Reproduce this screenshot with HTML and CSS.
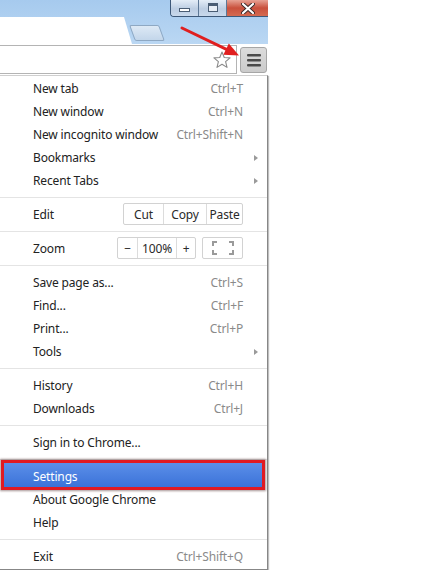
FILE: index.html
```html
<!DOCTYPE html>
<html lang="en">
  <head>
    <meta charset="UTF-8" />
    <meta name="viewport" content="width=device-width, initial-scale=1.0" />
    <title>Chrome menu</title>
    <link rel="stylesheet" href="styles.css">
  </head>
  <body>
    <div class="window">
      <div class="frame">
        <div class="tab"></div>
        <div class="newtab"></div>
        <div class="caption">
          <span class="cap-btn cap-min"><i></i></span>
          <span class="cap-btn cap-max"><i></i></span>
          <span class="cap-btn cap-close">
            <svg width="14" height="11" viewBox="0 0 14 11">
              <path d="M2 1 L12 10 M12 1 L2 10" stroke="#3a2a2a" stroke-width="4" stroke-linecap="round" />
              <path d="M2 1 L12 10 M12 1 L2 10" stroke="#fff" stroke-width="2.2" stroke-linecap="round" />
            </svg>
          </span>
        </div>
      </div>

      <div class="toolbar">
        <div class="omnibox">
          <svg class="star" width="18" height="18" viewBox="0 0 18 18">
            <polygon points="9,1 11.23,6.43 17.08,6.87 12.61,10.67 14,16.38 9,13.3 4,16.38 5.39,10.67 0.92,6.87 6.77,6.43" fill="#fff" stroke="#8a8a8a" stroke-width="1.1" stroke-linejoin="round" />
          </svg>
        </div>
        <div class="menu-btn">
          <svg width="14" height="13" viewBox="0 0 14 13">
            <rect x="0" y="0" width="14" height="2.6" rx="1" fill="#4a4a4a" />
            <rect x="0" y="5" width="14" height="2.6" rx="1" fill="#4a4a4a" />
            <rect x="0" y="10" width="14" height="2.6" rx="1" fill="#4a4a4a" />
          </svg>
        </div>
      </div>

      <ul class="menu">
        <li class="item"><span>New tab</span><span class="key">Ctrl+T</span></li>
        <li class="item"><span>New window</span><span class="key">Ctrl+N</span></li>
        <li class="item"><span>New incognito window</span><span class="key">Ctrl+Shift+N</span></li>
        <li class="item"><span>Bookmarks</span><span></span><span class="sub"></span></li>
        <li class="item"><span>Recent Tabs</span><span></span><span class="sub"></span></li>
        <li class="sep"></li>
        <li class="item">
          <span>Edit</span>
          <span class="btns">
            <span class="btn btn-cut">Cut</span>
            <span class="btn btn-copy">Copy</span>
            <span class="btn btn-paste">Paste</span>
          </span>
        </li>
        <li class="sep"></li>
        <li class="item">
          <span>Zoom</span>
          <span class="zoom">
            <span class="btns">
              <span class="btn btn-minus">&minus;</span>
              <span class="btn btn-level">100%</span>
              <span class="btn btn-plus">+</span>
            </span>
            <span class="btns btn-full">
              <svg width="22" height="14" viewBox="0 0 22 14">
                <path d="M1 5 V1 H5 M17 1 H21 V5 M21 9 V13 H17 M5 13 H1 V9" fill="none" stroke="#9a9a9a" stroke-width="2" />
              </svg>
            </span>
          </span>
        </li>
        <li class="sep"></li>
        <li class="item"><span>Save page as...</span><span class="key">Ctrl+S</span></li>
        <li class="item"><span>Find...</span><span class="key">Ctrl+F</span></li>
        <li class="item"><span>Print...</span><span class="key">Ctrl+P</span></li>
        <li class="item"><span>Tools</span><span></span><span class="sub"></span></li>
        <li class="sep"></li>
        <li class="item"><span>History</span><span class="key">Ctrl+H</span></li>
        <li class="item"><span>Downloads</span><span class="key">Ctrl+J</span></li>
        <li class="sep"></li>
        <li class="item"><span>Sign in to Chrome...</span></li>
        <li class="sep"></li>
        <li class="item active"><span>Settings</span></li>
        <li class="item"><span>About Google Chrome</span></li>
        <li class="item"><span>Help</span></li>
        <li class="sep"></li>
        <li class="item"><span>Exit</span><span class="key">Ctrl+Shift+Q</span></li>
      </ul>

      <!-- red pointer to the menu button -->
      <svg class="pointer" width="268" height="80" viewBox="0 0 268 80">
        <line x1="182" y1="28" x2="227" y2="49.7" stroke="#e01f1f" stroke-width="3" stroke-linecap="round" />
        <polygon points="239,55.5 223.4,54.8 228.8,43.6" fill="#e01f1f" />
      </svg>
    </div>
  </body>
</html>
```

FILE: styles.css
```css
* {
  margin: 0;
  padding: 0;
  box-sizing: border-box;
}

body {
  background: #fff;
  font-family: "Noto Sans", "Open Sans", sans-serif;
  font-size: 12px;
  letter-spacing: -0.15px;
  color: #222;
}

.window {
  width: 268px;
  position: relative;
}

/* title bar */
.frame {
  height: 44px;
  display: flex;
  align-items: flex-start;
  background: linear-gradient(#a6caee, #bad7f3);
}

.tab {
  width: 132px;
  height: 27px;
  margin-top: 17px;
  background: #fff;
  clip-path: polygon(0 0, 124px 0, 132px 100%, 0 100%);
}

.newtab {
  width: 30px;
  height: 16px;
  margin-top: 25px;
  border: 1px solid #8ea8c3;
  border-radius: 2px;
  background: linear-gradient(#dde9f5, #c3d6ea);
  transform: skewX(20deg);
}

.caption {
  margin-left: auto;
  display: flex;
  height: 17px;
  border: 1px solid #3d5878;
  border-top: none;
  border-right: none;
  border-radius: 0 0 0 4px;
  overflow: hidden;
}

.cap-btn {
  display: flex;
  align-items: center;
  justify-content: center;
  height: 16px;
  background: linear-gradient(#e4edf7, #bccde2 55%, #c9d9ec);
}

.cap-min {
  width: 28px;
  border-right: 1px solid #5d7896;
}

.cap-min i {
  width: 11px;
  height: 4px;
  margin-top: 4px;
  background: #fff;
  border: 1px solid #4a5d74;
}

.cap-max {
  width: 28px;
  border-right: 1px solid #5d7896;
}

.cap-max i {
  width: 10px;
  height: 9px;
  margin-bottom: 2px;
  border: 1px solid #4a5d74;
  border-top-width: 3px;
  background: #e8eef6;
}

.cap-close {
  width: 41px;
  background: linear-gradient(#e7a294, #c9503c 50%, #d46a50);
}

/* toolbar */
.toolbar {
  height: 31px;
  display: flex;
  align-items: flex-start;
  gap: 3px;
  padding-top: 1px;
  background: #fff;
}

.omnibox {
  width: 237px;
  height: 29px;
  border: 1px solid #b4b4b4;
  border-left: none;
  display: flex;
  align-items: center;
  justify-content: flex-end;
  padding-right: 5px;
}

.menu-btn {
  width: 27px;
  height: 26px;
  margin-top: 2px;
  border: 1px solid #a6a6a6;
  border-radius: 3px;
  background: linear-gradient(#dcdcdc, #cbcbcb);
  display: flex;
  align-items: center;
  justify-content: center;
}

/* menu */
.menu {
  list-style: none;
  width: 268px;
  padding: 1px 0;
  border-top: 1px solid #cfcfcf;
  border-right: 1px solid #878787;
  border-bottom: 1px solid #878787;
  box-shadow: 1px 1px 1px rgba(0, 0, 0, 0.25);
}

.item {
  display: grid;
  grid-template-columns: 1fr auto 24px;
  align-items: center;
  height: 23px;
  padding-left: 33px;
  white-space: nowrap;
}

.key {
  color: #8a8a8a;
}

.sub {
  width: 0;
  height: 0;
  margin-left: 11px;
  border-left: 4px solid #9a9a9a;
  border-top: 3.5px solid transparent;
  border-bottom: 3.5px solid transparent;
}

.sep {
  height: 1px;
  margin: 5px 0;
  background: #e4e4e4;
}

.btns {
  display: flex;
  height: 22px;
  align-self: start;
  border: 1px solid #d2d2d2;
  border-radius: 2px;
  color: #2a2a2a;
}

.btn {
  display: flex;
  align-items: center;
  justify-content: center;
}

.btn + .btn {
  border-left: 1px solid #dcdcdc;
}

.btn-cut { width: 39px; }
.btn-copy { width: 43px; }
.btn-paste { width: 36px; }

.zoom {
  display: flex;
  gap: 6px;
  align-self: start;
}

.btn-minus { width: 19px; }
.btn-level { width: 39px; }
.btn-plus { width: 19px; }

.btn-full {
  width: 41px;
  align-items: center;
  justify-content: center;
}

.active {
  position: relative;
  z-index: 0;
  color: #fff;
}

.active::before {
  content: "";
  position: absolute;
  top: -5px;
  bottom: -2px;
  left: 1px;
  right: 2px;
  z-index: -1;
  border: 3px solid #e01a22;
  background: linear-gradient(#5b8fe9, #3b72d8);
  box-shadow: 0 0 2px 1px rgba(60, 20, 20, 0.45);
}

.pointer {
  position: absolute;
  left: 0;
  top: 0;
  pointer-events: none;
}
```
